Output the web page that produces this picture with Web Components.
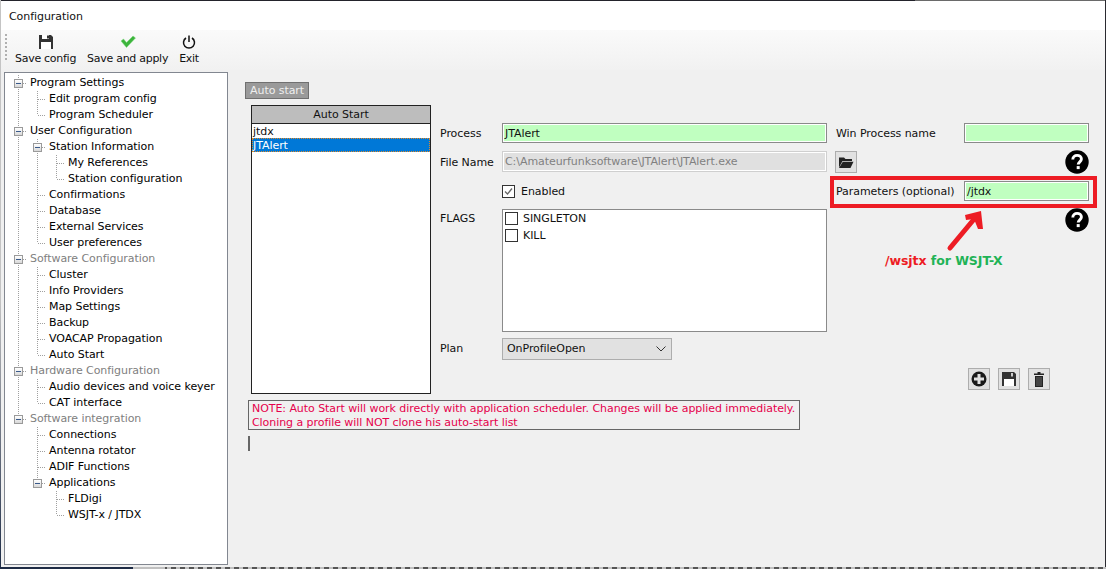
<!DOCTYPE html>
<html>
<head>
<meta charset="utf-8">
<title>Configuration</title>
<style>
  html, body { margin: 0; padding: 0; height: 100%; overflow: hidden; background: #f0f0f0; }
  body { font: 12px Tahoma, "DejaVu Sans", sans-serif; color: #000; }
</style>
</head>
<body>
<config-window></config-window>

<script>
// shared font for every shadow root
const FONT = `font-family: "DejaVu Sans", sans-serif; font-size: 11px; letter-spacing: -0.06px;`;

// ---- toolbar ----
class ToolButton extends HTMLElement {
  constructor() {
    super();
    this.attachShadow({ mode: 'open' });
    this.shadowRoot.innerHTML = `
      <style>
        :host { display: flex; flex-direction: column; align-items: center; ${FONT} letter-spacing: -0.28px; }
        .icon { height: 16px; display: flex; align-items: center; justify-content: center; }
        .text { line-height: 16px; margin-top: 1px; white-space: nowrap; }
      </style>
      <div class="icon"><slot name="icon"></slot></div>
      <div class="text"><slot></slot></div>`;
  }
}
customElements.define('tool-button', ToolButton);

class ConfigToolbar extends HTMLElement {
  constructor() {
    super();
    this.attachShadow({ mode: 'open' });
    this.shadowRoot.innerHTML = `
      <style>
        :host { display: flex; height: 40px; box-sizing: border-box; padding: 4px 0 0 5px; gap: 11px;
                background: linear-gradient(#fafafa, #f1f1f1); }
        .grip { width: 2px; height: 28px; margin-right: -3px;
                background: repeating-linear-gradient(#b0b0b0 0 2px, transparent 2px 4px); }
      </style>
      <div class="grip"></div>
      <slot></slot>`;
  }
}
customElements.define('config-toolbar', ConfigToolbar);

// ---- tree ----
class ConfigTree extends HTMLElement {
  constructor() {
    super();
    this.attachShadow({ mode: 'open' });
    const items = [
      [0, 'Program Settings', 1], [1, 'Edit program config'], [1, 'Program Scheduler'],
      [0, 'User Configuration', 1], [1, 'Station Information', 1], [2, 'My References'], [2, 'Station configuration'],
      [1, 'Confirmations'], [1, 'Database'], [1, 'External Services'], [1, 'User preferences'],
      [0, 'Software Configuration', 1, 1], [1, 'Cluster'], [1, 'Info Providers'], [1, 'Map Settings'], [1, 'Backup'],
      [1, 'VOACAP Propagation'], [1, 'Auto Start'],
      [0, 'Hardware Configuration', 1, 1], [1, 'Audio devices and voice keyer'], [1, 'CAT interface'],
      [0, 'Software integration', 1, 1], [1, 'Connections'], [1, 'Antenna rotator'], [1, 'ADIF Functions'],
      [1, 'Applications', 1], [2, 'FLDigi'], [2, 'WSJT-x / JTDX']
    ];
    // does another row of this depth follow before the branch ends?
    const hasNext = (i, depth) => {
      for (let j = i + 1; j < items.length; j++) {
        if (items[j][0] < depth) return false;
        if (items[j][0] === depth) return true;
      }
      return false;
    };
    const rows = items.map(([depth, text, open, muted], i) => {
      let guides = '';
      for (let d = 0; d <= depth; d++) {
        const x = 13 + d * 19;
        if (d < depth) {
          if (hasNext(i, d)) guides += `<i class="v" style="left:${x}px"></i>`;
        } else {
          guides += `<i class="${hasNext(i, d) ? 'v' : 'v end'}" style="left:${x}px"></i>`;
          guides += `<i class="h" style="left:${x + 1}px"></i>`;
        }
      }
      const box = open ? `<b class="box" style="left:${9 + depth * 19}px"></b>` : '';
      return `<div class="row${muted ? ' muted' : ''}" style="padding-left:${25 + depth * 19}px">${guides}${box}<span>${text}</span></div>`;
    }).join('');
    this.shadowRoot.innerHTML = `
      <style>
        :host { display: block; width: 224px; height: 493px; box-sizing: border-box; margin-left: 4px;
                background: #fff; border: 1px solid #828790; padding-top: 2px; overflow: hidden; ${FONT} color: #000; }
        .row { position: relative; height: 16px; line-height: 16px; white-space: nowrap; }
        .muted { color: #808080; }
        i { position: absolute; display: block; }
        .v { top: 0; bottom: 0; width: 1px;
             background: repeating-linear-gradient(#a0a0a0 0 1px, transparent 1px 2px); }
        .v.end { bottom: 8px; }
        .h { top: 8px; width: 7px; height: 1px;
             background: repeating-linear-gradient(90deg, #a0a0a0 0 1px, transparent 1px 2px); }
        .box { position: absolute; top: 4px; width: 7px; height: 7px; border: 1px solid #9a9a9a;
               background: linear-gradient(#fff, #d8d8d8); z-index: 1; }
        .box::after { content: ""; position: absolute; left: 1px; right: 1px; top: 3px; height: 1px; background: #3a5a8a; }
        span { position: relative; }
      </style>
      ${rows}`;
  }
}
customElements.define('config-tree', ConfigTree);

// ---- list ----
class AutoList extends HTMLElement {
  constructor() {
    super();
    this.attachShadow({ mode: 'open' });
    this.shadowRoot.innerHTML = `
      <style>
        :host { display: flex; flex-direction: column; width: 180px; height: 289px; box-sizing: border-box;
                border: 1px solid #222; background: #fff; ${FONT} }
        .head { height: 17px; line-height: 18px; text-align: center; background: #bdbdbd;
                border-bottom: 1px solid #222; color: #111; }
        .item { height: 14px; line-height: 15px; padding-left: 1px; box-sizing: border-box; }
        .sel { background: #0078d7; color: #fff; outline: 1px dotted #e08a2a; outline-offset: -1px; }
      </style>
      <div class="head">Auto Start</div>
      <div class="list">
        <div class="item">jtdx</div>
        <div class="item sel">JTAlert</div>
      </div>`;
  }
}
customElements.define('auto-list', AutoList);

// ---- small form bits ----
class TextField extends HTMLElement {
  constructor() {
    super();
    this.attachShadow({ mode: 'open' });
    this.shadowRoot.innerHTML = `
      <style>
        :host { display: block; height: 21px; box-sizing: border-box; border: 1px solid #8a8a8a;
                background: #c0ffc0; line-height: 19px; padding-left: 2px; white-space: nowrap; overflow: hidden;
                outline: 1px solid #fff; outline-offset: -2px; ${FONT} color: #111; }
        :host([disabled]) { background: #e0e0e0; color: #808080; border-color: #cfcfcf; }
      </style>
      <slot></slot>`;
  }
}
customElements.define('text-field', TextField);

class CheckItem extends HTMLElement {
  constructor() {
    super();
    this.attachShadow({ mode: 'open' });
    this.shadowRoot.innerHTML = `
      <style>
        :host { display: flex; align-items: center; gap: 5px; height: 17px; ${FONT} color: #111; }
        .box { width: 13px; height: 13px; box-sizing: border-box; border: 1px solid #333; background: #fff; display: flex; }
      </style>
      <div class="box"></div>
      <slot></slot>`;
    if (this.hasAttribute('checked')) {
      this.shadowRoot.querySelector('.box').innerHTML =
        '<svg width="11" height="11" viewBox="0 0 11 11"><path d="M2 5.5 L4.5 8 L9 2.5" fill="none" stroke="#666" stroke-width="1.3"/></svg>';
    }
  }
}
customElements.define('check-item', CheckItem);

class IconButton extends HTMLElement {
  constructor() {
    super();
    this.attachShadow({ mode: 'open' });
    this.shadowRoot.innerHTML = `
      <style>
        :host { display: flex; width: 22px; height: 22px; box-sizing: border-box; border: 1px solid #adadad;
                background: #e1e1e1; align-items: center; justify-content: center; }
      </style>
      <slot></slot>`;
  }
}
customElements.define('icon-button', IconButton);

class HelpIcon extends HTMLElement {
  constructor() {
    super();
    this.attachShadow({ mode: 'open' });
    this.shadowRoot.innerHTML = `
      <style>
        :host { display: block; width: 24px; height: 24px; }
        svg { display: block; }
      </style>
      <svg width="24" height="24" viewBox="0 0 24 24">
        <circle cx="12" cy="12" r="11.7" fill="#000"/>
        <path d="M7.800 9.500C7.800 7 9.800 5.400 12.100 5.400C14.500 5.400 16.400 7 16.400 9.100C16.400 11.700 13.200 12 13.200 14.600" fill="none" stroke="#fff" stroke-width="2.900"/>
        <rect x="11.700" y="16.100" width="3" height="3" fill="#fff"/>
      </svg>`;
  }
}
customElements.define('help-icon', HelpIcon);

// ---- right hand panel ----
class AutoStartPanel extends HTMLElement {
  constructor() {
    super();
    this.attachShadow({ mode: 'open' });
    this.shadowRoot.innerHTML = `
      <style>
        :host { display: block; position: relative; flex: 1; padding: 10px 0 0 17px; ${FONT} color: #111; }
        .tab { display: inline-block; padding: 0 4px; background: #9a9a9a; color: #efefef;
               border: 1px solid #707070; height: 15px; line-height: 16px; }
        .body { display: flex; margin-top: 6px; margin-left: 6px; }
        form { display: grid; margin: 18px 0 0 9px;
               grid-template-columns: 62px 325px 9px 128px 125px 8px;
               grid-template-rows: 20px 8px 21px 10px 18px 9px 123px 6px 22px; }
        form > * { min-width: 0; }
        .lab { line-height: 21px; white-space: nowrap; }
        .flags { border: 1px solid #8a8a8a; background: #fff; padding: 0 2px; box-sizing: border-box; }
        .combo { width: 170px; height: 22px; box-sizing: border-box; border: 1px solid #adadad; background: #e1e1e1;
                 display: flex; align-items: center; justify-content: space-between; padding: 0 5px 1px 4px; color: #111; }
        .tools { display: flex; gap: 8px; justify-content: flex-end; }
        .note { width: 552px; box-sizing: border-box; margin: 6px 0 0 3px; border: 1px solid #666; color: #e6004c;
                padding: 1px 0 0 3px; line-height: 14px; height: 30px; white-space: nowrap; }
        .caret { width: 2px; height: 15px; background: #666; margin: 6px 0 0 3px; }
        .mark { position: absolute; left: 602px; top: 104px; width: 267px; height: 32px; box-sizing: border-box;
                border: 4px solid #ed1c24; }
        .hint { position: absolute; left: 657px; top: 181px; font: bold 12.5px "DejaVu Sans", sans-serif; color: #1fb356; white-space: nowrap; }
        .hint b { color: #ed1c24; }
        .arrow { position: absolute; left: 712px; top: 133px; }
      </style>
      <div class="tab">Auto start</div>
      <div class="body">
        <auto-list></auto-list>
        <form>
          <div class="lab" style="grid-area:1/1">Process</div>
          <text-field style="grid-area:1/2;height:20px">JTAlert</text-field>
          <div class="lab" style="grid-area:1/4">Win Process name</div>
          <text-field style="grid-area:1/5;height:20px"></text-field>

          <div class="lab" style="grid-area:3/1;line-height:23px">File Name</div>
          <text-field disabled style="grid-area:3/2">C:\\Amateurfunksoftware\\JTAlert\\JTAlert.exe</text-field>
          <icon-button style="grid-area:3/4;margin-left:-1px">
            <svg width="16" height="14" viewBox="0 0 16 14"><path d="M1 2.500H6L7.500 4H14V6H4.500L1 12.500Z M1 13L4.800 6.800H15.500L12.500 13Z" fill="#222"/></svg>
          </icon-button>
          <help-icon style="grid-area:3/5;justify-self:end;margin:-1px 0 0 0"></help-icon>

          <check-item checked style="grid-area:5/2;height:18px;gap:6px">Enabled</check-item>
          <div class="lab" style="grid-area:5/4;line-height:20px">Parameters (optional)</div>
          <text-field style="grid-area:5/5;height:20px;margin-top:-1px;align-self:start">/jtdx</text-field>

          <div class="lab" style="grid-area:7/1;line-height:20px">FLAGS</div>
          <div class="flags" style="grid-area:7/2">
            <check-item>SINGLETON</check-item>
            <check-item>KILL</check-item>
          </div>
          <help-icon style="grid-area:7/5;justify-self:end;margin:-1px 0 0 0"></help-icon>

          <div class="lab" style="grid-area:9/1;line-height:22px">Plan</div>
          <div class="combo" style="grid-area:9/2">
            <span>OnProfileOpen</span>
            <svg width="10" height="6" viewBox="0 0 10 6"><path d="M.5 .5 L5 5 L9.500 .5" fill="none" stroke="#333"/></svg>
          </div>
          <div class="tools" style="grid-area:9/4/9/6;margin:30px 39px -30px 0">
            <icon-button><svg width="16" height="16" viewBox="0 0 16 16"><circle cx="8" cy="8" r="7.500" fill="#1a1a1a"/><path d="M6.500 3H9.500V6.500H13V9.500H9.500V13H6.500V9.500H3V6.500H6.500Z" fill="#e1e1e1"/></svg></icon-button>
            <icon-button><svg width="16" height="16" viewBox="0 0 16 16"><path d="M1 1H13L15 3V15H1Z" fill="#333"/><rect x="3" y="8" width="10" height="7" fill="#fff"/><rect x="10" y="2" width="2" height="3.500" fill="#ccc"/></svg></icon-button>
            <icon-button><svg width="10" height="15" viewBox="0 0 10 15"><path d="M3.500 0H6.500V1.500H10V3H0V1.500H3.500Z M1 4H9V15H1Z" fill="#222"/><path d="M3 5V14M5 5V14M7 5V14" stroke="#777" stroke-width=".8"/></svg></icon-button>
          </div>
        </form>
      </div>
      <div class="note">NOTE: Auto Start will work directly with application scheduler. Changes will be applied immediately.<br>Cloning a profile will NOT clone his auto-start list</div>
      <div class="caret"></div>

      <div class="mark"></div>
      <svg class="arrow" width="50" height="50" viewBox="0 0 50 50">
        <path d="M10 43 L35 13" stroke="#ed1c24" stroke-width="5" stroke-linecap="round" fill="none"/>
        <path d="M25 10 L41 6 L43 24 L38 24 L34 14 L26 15 Z" fill="#ed1c24"/>
      </svg>
      <div class="hint"><b>/wsjtx</b> for WSJT-X</div>`;
  }
}
customElements.define('auto-start-panel', AutoStartPanel);

// ---- the window ----
class ConfigWindow extends HTMLElement {
  constructor() {
    super();
    this.attachShadow({ mode: 'open' });
    this.shadowRoot.innerHTML = `
      <style>
        :host { display: flex; position: relative; flex-direction: column; height: 569px; background: #f0f0f0; overflow: hidden; ${FONT} color: #111; }
        .title { height: 30px; box-sizing: border-box; background: #fff; line-height: 33px; padding-left: 9px; }
        .main { display: flex; padding-top: 2px; flex: 1; }
        /* what shows of the desktop around the window */
        .edge { position: absolute; display: block; }
        .top { left: 0; right: 0; top: 0; height: 1px; background: linear-gradient(90deg, #23232b 915px, #6a6a6a 915px); }
        .right { top: 0; right: 0; bottom: 0; width: 1px; background: #2a2a30; }
        .left { top: 0; left: 0; bottom: 0; width: 1px; background: linear-gradient(#c4c4c4 300px, #22304a 560px); }
        .bottom { left: 0; right: 0; bottom: 0; height: 2px;
                  background: linear-gradient(90deg, #1d2b45 133px, #c0c0c0 133px 165px, transparent 165px),
                              repeating-linear-gradient(90deg, #555 0 5px, #c0c0c0 5px 9px); }
      </style>
      <div class="title">Configuration</div>
      <config-toolbar>
        <tool-button>
          <svg slot="icon" width="16" height="16" viewBox="0 0 16 16"><path d="M1 1H13L15 3V15H1Z" fill="#333"/><rect x="3" y="8" width="10" height="7" fill="#fff"/><rect x="4" y="1" width="7" height="4" fill="#fff"/><rect x="9" y="1.500" width="2" height="3" fill="#333"/></svg>
          Save config
        </tool-button>
        <tool-button>
          <svg slot="icon" width="16" height="14" viewBox="0 0 16 14"><path d="M1 6L3.500 4L6.500 7.500L13 1L15.500 3L6.500 12.500Z" fill="#3cb43c" stroke="#7ad67a" stroke-width=".5"/></svg>
          Save and apply
        </tool-button>
        <tool-button>
          <svg slot="icon" width="14" height="14" viewBox="0 0 14 14"><path d="M4 3A5.500 5.500 0 1 0 10 3" fill="none" stroke="#111" stroke-width="1.500"/><path d="M7 .5V7" stroke="#111" stroke-width="1.500"/></svg>
          Exit
        </tool-button>
      </config-toolbar>
      <div class="main">
        <config-tree></config-tree>
        <auto-start-panel></auto-start-panel>
      </div>
      <i class="edge top"></i><i class="edge right"></i><i class="edge left"></i><i class="edge bottom"></i>`;
  }
}
customElements.define('config-window', ConfigWindow);
</script>
</body>
</html>
